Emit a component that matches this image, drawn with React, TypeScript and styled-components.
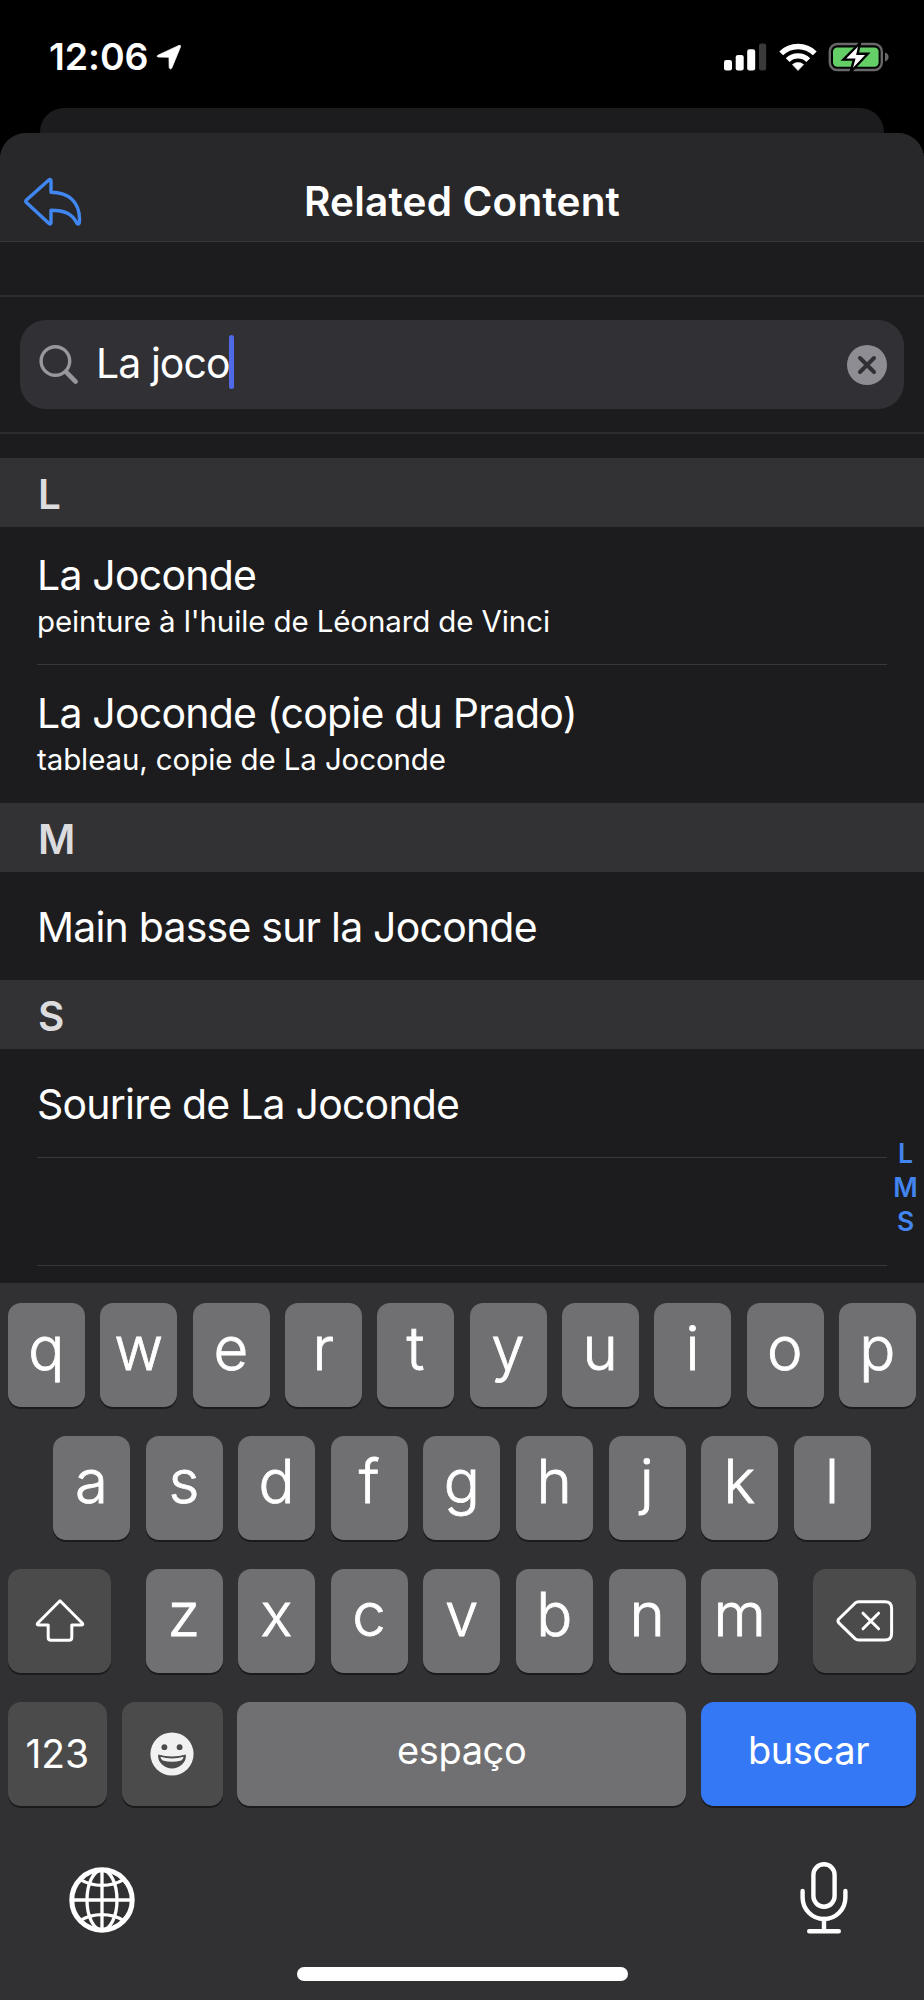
import React from "react";
import styled, { createGlobalStyle } from "styled-components";

const GlobalStyle = createGlobalStyle`
  * { box-sizing: border-box; }
  html, body { margin: 0; padding: 0; background: #000; }
  body { font-family: Inter, "Liberation Sans", sans-serif; color: #fff; }
  svg { display: block; flex: none; }
`;

const Screen = styled.div`
  width: 924px;
  height: 2000px;
  overflow: hidden;
  display: flex;
  flex-direction: column;
  background: #000;
`;

const StatusBar = styled.header`
  height: 108px;
  flex: none;
  padding: 5px 34px 0 49px;
  display: flex;
  align-items: center;
  justify-content: space-between;
`;

const StatusGroup = styled.div<{ $gap: number }>`
  display: flex;
  align-items: center;
  gap: ${(p) => p.$gap}px;
`;

const Time = styled.span`
  font-size: 37.5px;
  line-height: 46px;
  font-weight: 600;
  letter-spacing: -0.1px;
`;

const BackSheet = styled.div`
  height: 25px;
  flex: none;
  margin: 0 40px;
  border-radius: 24px 24px 0 0;
  background: #1c1c1e;
`;

const Sheet = styled.main`
  height: 1150px;
  flex: none;
  display: flex;
  flex-direction: column;
  border-radius: 26px 26px 0 0;
  background: #1c1c1e;
  overflow: hidden;
`;

const NavBar = styled.div`
  height: 109px;
  flex: none;
  padding: 30px 23px 0;
  display: grid;
  grid-template-columns: 60px 1fr 60px;
  align-items: center;
  background: #28282a;
  border-bottom: 1px solid #38383a;
`;

const NavTitle = styled.h1`
  margin: 0;
  font-size: 40.5px;
  line-height: 50px;
  font-weight: 600;
  text-align: center;
  letter-spacing: 0.2px;
`;

const SearchArea = styled.div`
  margin-top: 53px;
  height: 139px;
  flex: none;
  padding: 23px 20px 0;
  border-top: 2px solid #2c2c2e;
  border-bottom: 2px solid #2c2c2e;
`;

const SearchField = styled.div`
  height: 89px;
  display: flex;
  align-items: center;
  padding: 0 17px 0 18px;
  border-radius: 26px;
  background: #313135;
`;

const Query = styled.span`
  margin: -3px 0 0 16px;
  font-size: 41px;
  line-height: 50px;
  letter-spacing: -0.95px;
`;

const Caret = styled.span`
  width: 5px;
  height: 54px;
  margin: -5px auto 0 -1px;
  border-radius: 2.5px;
  background: #5069e6;
`;

const Results = styled.div`
  margin-top: 24px;
  flex: 1;
  position: relative;
`;

const SectionHeader = styled.h2`
  height: 69px;
  margin: 0;
  padding: 5px 38px 0;
  display: flex;
  align-items: center;
  font-size: 40.5px;
  font-weight: 600;
  line-height: 50px;
  color: #dcdcdf;
  background: #323234;
`;

const Row = styled.div<{ $tall?: boolean; $line?: boolean }>`
  height: ${(p) => (p.$tall ? 138 : 108)}px;
  margin: 0 37px 0 37px;
  padding-top: ${(p) => (p.$tall ? 1 : 2)}px;
  display: flex;
  flex-direction: column;
  justify-content: center;
  border-bottom: 1px solid ${(p) => (p.$line ? "#38383a" : "transparent")};
`;

const LastRow = styled(Row)`
  height: 109px;
`;

const RowTitle = styled.span`
  font-size: 41px;
  line-height: 50px;
  letter-spacing: -0.79px;
  white-space: nowrap;
`;

const RowNote = styled.span`
  font-size: 29.5px;
  line-height: 42px;
  letter-spacing: -0.11px;
  white-space: nowrap;
`;

const Index = styled.nav`
  position: absolute;
  right: 0;
  top: 678px;
  width: 37px;
  display: flex;
  flex-direction: column;
  align-items: center;
  font-size: 26.5px;
  font-weight: 600;
  line-height: 34px;
  color: #4284f0;
`;

const Keyboard = styled.section`
  flex: 1;
  padding: 20px 8px 0;
  display: flex;
  flex-direction: column;
  background: #313133;
`;

const KeyRow = styled.div<{ $inset?: number }>`
  height: 133px;
  flex: none;
  padding: 0 ${(p) => p.$inset ?? 0}px;
  display: flex;
  justify-content: space-between;
  align-items: flex-start;
`;

const Letters = styled.div`
  width: 633px;
  display: flex;
  justify-content: space-between;
`;

const Key = styled.div<{ $w?: number; $kind?: "dark" | "blue" }>`
  width: ${(p) => p.$w ?? 77}px;
  height: 103.5px;
  display: flex;
  justify-content: center;
  align-items: center;
  border-radius: 13px;
  background: ${(p) => (p.$kind === "dark" ? "#4b4b4b" : p.$kind === "blue" ? "#3478f6" : "#707072")};
  box-shadow: 0 2px 0.5px #1b1b1d;
`;

const EmojiKey = styled(Key)`
  margin: 0 -0.5px 0 0.5px;
`;

const Glyph = styled.span`
  font-size: 60px;
  line-height: 70px;
  font-weight: 300;
  -webkit-text-stroke: 0.8px #fff;
  margin: -14px 0 0 -0.5px;
`;

const KeyLabel = styled.span<{ $word?: boolean }>`
  font-size: ${(p) => (p.$word ? 38 : 39)}px;
  line-height: 50px;
  margin-top: ${(p) => (p.$word ? -7 : 0)}px;
  letter-spacing: ${(p) => (p.$word ? -0.4 : 0)}px;
`;

const KeyboardFooter = styled.div`
  display: flex;
  justify-content: space-between;
  padding: 27px 67px 0 59px;
  height: 130px;
`;

const GlobeKey = styled.div`
  padding-top: 3px;
`;

const HomeIndicator = styled.div`
  width: 331px;
  height: 14px;
  margin: 2px auto 0;
  border-radius: 7px;
  background: #fff;
`;

const LocationIcon = () => (
  <svg width="26" height="26" viewBox="0 0 26 26">
    <path d="M2 11.2 23 1.4Q25 .8 24.4 3L15.8 24Q14.3 26 13.2 23.8L13 13.2 2.2 13Q0 12.4 2 11.2Z" fill="#fff" stroke="#fff" strokeWidth="0.8" strokeLinejoin="round" />
  </svg>
);

const SignalIcon = () => (
  <svg width="43" height="28" viewBox="0 0 43 28">
    <rect x="0" y="17" width="8" height="10.5" rx="2.3" fill="#fff" />
    <rect x="11.7" y="12" width="8" height="15.5" rx="2.3" fill="#fff" />
    <rect x="23.2" y="6.3" width="8" height="21.2" rx="2.3" fill="#fff" />
    <rect x="35" y="0.5" width="7.2" height="27" rx="2.3" fill="#3a3a3b" />
  </svg>
);

const WifiIcon = () => (
  <svg width="38" height="28" viewBox="0 0 38 28">
    <g fill="none" stroke="#fff" strokeWidth="5.4">
      <path d="M2.2 10.4a24 24 0 0 1 33.6 0" />
      <path d="M8.7 17.1a14.6 14.6 0 0 1 20.6 0" />
    </g>
    <path d="M13.4 21.6a8.4 8.4 0 0 1 11.2 0L19 27.6Z" fill="#fff" stroke="#fff" strokeWidth="0.6" strokeLinejoin="round" />
  </svg>
);

const BatteryIcon = () => (
  <svg width="62" height="30" viewBox="0 0 62 30">
    <rect x="1.8" y="2" width="52" height="26" rx="7.5" fill="none" stroke="#68686a" strokeWidth="2.4" />
    <path d="M57 10.5q3.6 1.2 3.6 4.5T57 19.5z" fill="#68686a" />
    <rect x="5" y="5.4" width="45.6" height="19.4" rx="4.2" fill="#65cf67" />
    <path
      d="M32 1 15.4 17.6H26L22.6 30 39.8 11.8H29.6Z"
      fill="#fff"
      stroke="#000"
      strokeWidth="2.4"
      strokeLinejoin="miter"
    />
  </svg>
);

const BackIcon = () => (
  <svg width="60" height="52" viewBox="0 0 60 52">
    <path
      d="M26.4 3.6Q28 3.2 28 5V16.3C45 16.3 57.8 25.5 56.4 46.5Q56 49 54 47.4C49.5 38 42 34.2 28 34.2V46.4Q28 48.8 26 47.6L3.4 26.6Q2.2 25.2 3.4 24Z"
      fill="none"
      stroke="#4187f2"
      strokeWidth="3.4"
      strokeLinejoin="round"
    />
  </svg>
);

const SearchIcon = () => (
  <svg width="42" height="42" viewBox="0 0 42 42">
    <circle cx="17.4" cy="17" r="14.3" fill="none" stroke="#98979e" strokeWidth="3.4" />
    <path d="M27.8 27.6 37.6 37.6" stroke="#98979e" strokeWidth="4.6" strokeLinecap="round" />
  </svg>
);

const ClearIcon = () => (
  <svg width="40" height="40" viewBox="0 0 40 40">
    <circle cx="20" cy="20" r="20" fill="#8e8d93" />
    <path d="M13 13 27 27M27 13 13 27" stroke="#313135" strokeWidth="4" strokeLinecap="round" />
  </svg>
);

const ShiftIcon = () => (
  <svg width="50" height="44" viewBox="0 0 50 44">
    <path
      d="M25 1.8 47.4 24.2Q48.4 26 46.4 26H36.8V38.4Q36.8 41.3 33.9 41.3H16.1Q13.2 41.3 13.2 38.4V26H3.6Q1.6 26 2.6 24.2Z"
      fill="none"
      stroke="#fff"
      strokeWidth="3"
      strokeLinejoin="round"
    />
  </svg>
);

const DeleteIcon = () => (
  <svg width="58" height="42" viewBox="0 0 58 42">
    <g fill="none" stroke="#fff" strokeWidth="3" strokeLinecap="round" strokeLinejoin="round">
      <path d="M22.5 1.8H49Q55.6 1.8 55.6 8.4V33.4Q55.6 40 49 40H22.5Q20.6 40 19 38.6L2.6 22.6Q1.4 20.9 2.6 19.2L19 3.2Q20.6 1.8 22.5 1.8Z" />
      <path d="M27 13.2 42.6 28.8M42.6 13.2 27 28.8" />
    </g>
  </svg>
);

const EmojiIcon = () => (
  <svg width="44" height="44" viewBox="0 0 44 44">
    <circle cx="22" cy="22" r="21.6" fill="#f1f1f1" />
    <circle cx="14.4" cy="15.2" r="2.9" fill="#4b4b4b" />
    <circle cx="29.6" cy="15.2" r="2.9" fill="#4b4b4b" />
    <path d="M8.2 22.4Q22 26.4 35.8 22.4 36.6 28 32 32.4 27.4 36.4 22 36.4T12 32.4Q7.4 28 8.2 22.4Z" fill="#4b4b4b" />
    <path d="M10.4 24.8Q22 28.2 33.6 24.8 33.2 27.6 31.2 28.4 22 31 12.8 28.4 10.8 27.6 10.4 24.8Z" fill="#f1f1f1" />
  </svg>
);

const GlobeIcon = () => (
  <svg width="70" height="70" viewBox="0 0 70 70">
    <g fill="none" stroke="#fff" strokeWidth="3.3">
      <circle cx="35" cy="35" r="30.2" strokeWidth="5" />
      <ellipse cx="35" cy="35" rx="15" ry="30" />
      <path d="M35 4V66M4 35H66" />
      <path d="M13 14.4Q23 20.4 35 20.4T57 14.4M13 55.6Q23 49.6 35 49.6T57 55.6" />
    </g>
  </svg>
);

const MicIcon = () => (
  <svg width="50" height="72" viewBox="0 0 50 72">
    <g fill="none" stroke="#fff" strokeWidth="4.4" strokeLinecap="round">
      <rect x="14.4" y="2.3" width="21.2" height="42.4" rx="10.6" />
      <path d="M3.6 29V35.6A21.4 21.4 0 0 0 46.4 35.6V29" />
      <path d="M25 57V69M10.2 69.3H39.8" />
    </g>
  </svg>
);

const letterKeys = (letters: string) =>
  letters.split("").map((c) => (
    <Key key={c}>
      <Glyph>{c}</Glyph>
    </Key>
  ));

export default function App() {
  return (
    <Screen>
      <GlobalStyle />
      <StatusBar>
        <StatusGroup $gap={8}>
          <Time>12:06</Time>
          <LocationIcon />
        </StatusGroup>
        <StatusGroup $gap={11.5}>
          <SignalIcon />
          <WifiIcon />
          <BatteryIcon />
        </StatusGroup>
      </StatusBar>
      <BackSheet />
      <Sheet>
        <NavBar>
          <BackIcon />
          <NavTitle>Related Content</NavTitle>
        </NavBar>
        <SearchArea>
          <SearchField>
            <SearchIcon />
            <Query>La joco</Query>
            <Caret />
            <ClearIcon />
          </SearchField>
        </SearchArea>
        <Results>
          <SectionHeader>L</SectionHeader>
          <Row $tall $line>
            <RowTitle>La Joconde</RowTitle>
            <RowNote>peinture à l'huile de Léonard de Vinci</RowNote>
          </Row>
          <Row $tall>
            <RowTitle>La Joconde (copie du Prado)</RowTitle>
            <RowNote>tableau, copie de La Joconde</RowNote>
          </Row>
          <SectionHeader>M</SectionHeader>
          <Row>
            <RowTitle>Main basse sur la Joconde</RowTitle>
          </Row>
          <SectionHeader>S</SectionHeader>
          <LastRow $line>
            <RowTitle>Sourire de La Joconde</RowTitle>
          </LastRow>
          <Row $line />
          <Index>
            <span>L</span>
            <span>M</span>
            <span>S</span>
          </Index>
        </Results>
      </Sheet>
      <Keyboard>
        <KeyRow>{letterKeys("qwertyuiop")}</KeyRow>
        <KeyRow $inset={45.3}>{letterKeys("asdfghjkl")}</KeyRow>
        <KeyRow>
          <Key $w={103} $kind="dark">
            <ShiftIcon />
          </Key>
          <Letters>{letterKeys("zxcvbnm")}</Letters>
          <Key $w={103} $kind="dark">
            <DeleteIcon />
          </Key>
        </KeyRow>
        <KeyRow>
          <Key $w={98.5} $kind="dark">
            <KeyLabel>123</KeyLabel>
          </Key>
          <EmojiKey $w={101} $kind="dark">
            <EmojiIcon />
          </EmojiKey>
          <Key $w={449}>
            <KeyLabel $word>espaço</KeyLabel>
          </Key>
          <Key $w={215} $kind="blue">
            <KeyLabel $word>buscar</KeyLabel>
          </Key>
        </KeyRow>
        <KeyboardFooter>
          <GlobeKey>
            <GlobeIcon />
          </GlobeKey>
          <MicIcon />
        </KeyboardFooter>
        <HomeIndicator />
      </Keyboard>
    </Screen>
  );
}
